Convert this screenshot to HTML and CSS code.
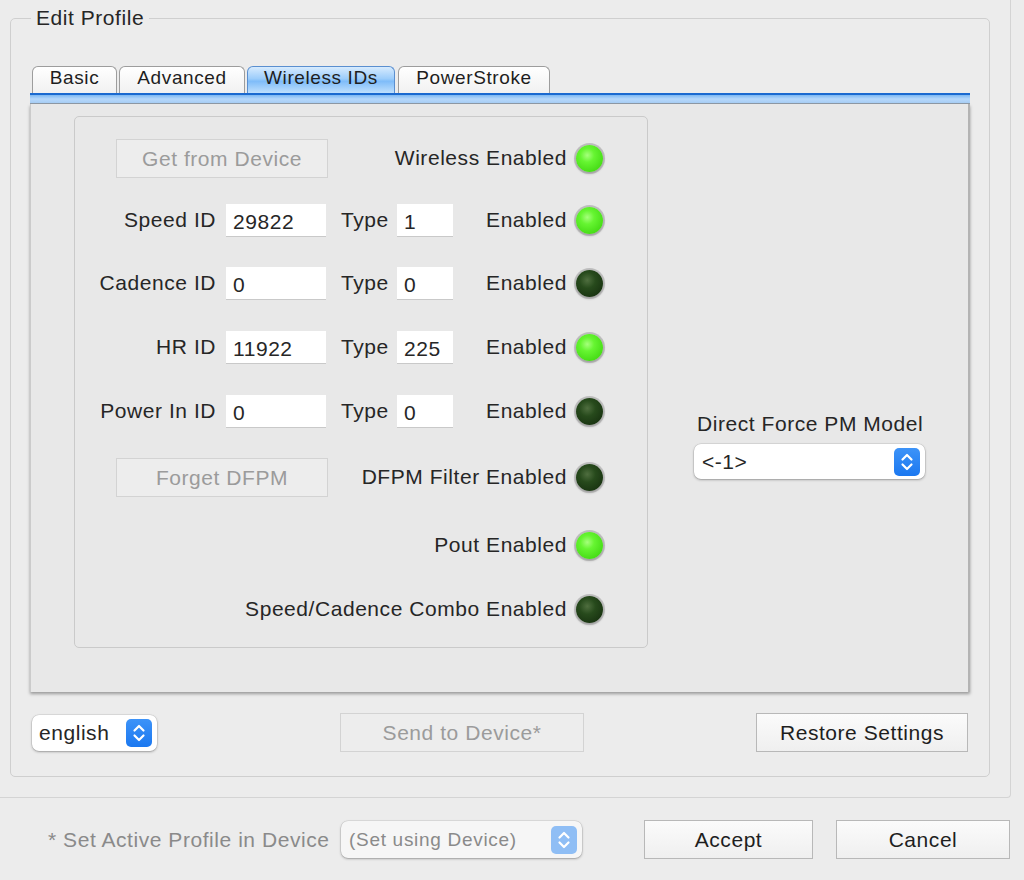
FILE: index.html
```html
<!DOCTYPE html>
<html>
<head>
<meta charset="utf-8">
<link rel="stylesheet" href="styles.css">
</head>
<body>
<div class="window">
  <div class="frame">
    <fieldset class="group">
      <legend class="group-title">Edit Profile</legend>
      <div class="tabview">
        <div class="tabs">
          <div class="tab tab-basic">Basic</div>
          <div class="tab tab-adv">Advanced</div>
          <div class="tab tab-wire selected">Wireless IDs</div>
          <div class="tab tab-ps">PowerStroke</div>
        </div>
        <div class="strip"></div>
        <div class="panel">
          <div class="box">
            <div class="row">
              <div class="btn disabled wide-btn">Get from Device</div>
              <span class="stat">Wireless Enabled</span><span class="led on"></span>
            </div>
            <div class="row">
              <span class="lbl">Speed ID</span><span class="field id">29822</span>
              <span class="type">Type</span><span class="field tp">1</span>
              <span class="stat">Enabled</span><span class="led on"></span>
            </div>
            <div class="row">
              <span class="lbl">Cadence ID</span><span class="field id">0</span>
              <span class="type">Type</span><span class="field tp">0</span>
              <span class="stat">Enabled</span><span class="led off"></span>
            </div>
            <div class="row">
              <span class="lbl">HR ID</span><span class="field id">11922</span>
              <span class="type">Type</span><span class="field tp">225</span>
              <span class="stat">Enabled</span><span class="led on"></span>
            </div>
            <div class="row">
              <span class="lbl">Power In ID</span><span class="field id">0</span>
              <span class="type">Type</span><span class="field tp">0</span>
              <span class="stat">Enabled</span><span class="led off"></span>
            </div>
            <div class="row">
              <div class="btn disabled wide-btn">Forget DFPM</div>
              <span class="stat">DFPM Filter Enabled</span><span class="led off"></span>
            </div>
            <div class="row">
              <span class="stat">Pout Enabled</span><span class="led on"></span>
            </div>
            <div class="row">
              <span class="stat">Speed/Cadence Combo Enabled</span><span class="led off"></span>
            </div>
          </div>
          <div class="side">
            <div class="side-label">Direct Force PM Model</div>
            <div class="select model">
              <span class="sel-text">&lt;-1&gt;</span>
              <span class="stepper"><svg viewBox="0 0 26 28" width="26" height="28"><path d="M8.5 11.5 L13 7 L17.5 11.5 M8.5 16.5 L13 21 L17.5 16.5" fill="none" stroke="#fff" stroke-width="2.2" stroke-linecap="round" stroke-linejoin="round"/></svg></span>
            </div>
          </div>
        </div>
      </div>
      <div class="actions">
        <div class="select lang">
          <span class="sel-text">english</span>
          <span class="stepper"><svg viewBox="0 0 26 28" width="26" height="28"><path d="M8.5 11.5 L13 7 L17.5 11.5 M8.5 16.5 L13 21 L17.5 16.5" fill="none" stroke="#fff" stroke-width="2.2" stroke-linecap="round" stroke-linejoin="round"/></svg></span>
        </div>
        <div class="btn disabled send-btn">Send to Device*</div>
        <div class="btn restore-btn">Restore Settings</div>
      </div>
    </fieldset>
  </div>
  <div class="footer">
    <span class="foot-label">* Set Active Profile in Device</span>
    <div class="select active-sel dim">
      <span class="sel-text">(Set using Device)</span>
      <span class="stepper"><svg viewBox="0 0 26 28" width="26" height="28"><path d="M8.5 11.5 L13 7 L17.5 11.5 M8.5 16.5 L13 21 L17.5 16.5" fill="none" stroke="#fff" stroke-width="2.2" stroke-linecap="round" stroke-linejoin="round"/></svg></span>
    </div>
    <div class="btn accept-btn">Accept</div>
    <div class="btn cancel-btn">Cancel</div>
  </div>
</div>
</body>
</html>
```

FILE: styles.css
```css
html, body {
  margin: 0;
  padding: 0;
  background: #ececec;
}
body {
  font-family: "Liberation Sans", Arial, sans-serif;
  font-size: 21px;
  letter-spacing: 0.55px;
  color: #262626;
  width: 1024px;
  height: 880px;
  overflow: hidden;
}
.window {
  width: 1024px;
}
.frame {
  width: 1010px;
  border-right: 1px solid #d4d4d4;
  border-bottom: 1px solid #d4d4d4;
  border-bottom-right-radius: 4px;
  padding-top: 6px;
  padding-bottom: 20px;
}
.group {
  margin: 0 20px 0 10px;
  border: 1px solid #cfcfcf;
  border-radius: 5px;
  padding: 0 19px 23px 19px;
  min-width: 0;
}
.group-title {
  margin-left: 1px;
  padding: 0 5px;
  line-height: 24px;
  height: 24px;
}
.tabview {
  margin-top: 36px;
  width: 940px;
}
.tabs {
  display: flex;
  height: 27px;
  align-items: flex-end;
  position: relative;
  z-index: 1;
}
.tab {
  height: 27px;
  box-sizing: border-box;
  border: 1px solid #9d9d9d;
  border-bottom: none;
  border-radius: 6px 6px 0 0;
  background: linear-gradient(#ffffff, #f1f1f1);
  text-align: center;
  line-height: 22px;
  font-size: 19px;
  letter-spacing: 0.6px;
  color: #1e1e1e;
}
.tab-basic { margin-left: 2px; width: 85px; }
.tab-adv { margin-left: 2px; width: 126px; }
.tab-wire { margin-left: 2px; width: 148px; }
.tab-ps { margin-left: 3px; width: 152px; }
.tab.selected {
  border-color: #5a8fd0;
  background: linear-gradient(#d7ebfe 0%, #9ccdfb 45%, #7fbcf9 55%, #bfe0fd 100%);
}
.strip {
  height: 11px;
  box-sizing: border-box;
  border-top: 2px solid #1b6ad0;
  border-bottom: 1px solid #8f9aa6;
  background: linear-gradient(#7db8f2, #b6d8fb 50%, #a7cdf4);
}
.panel {
  height: 588px;
  box-sizing: border-box;
  background: #e8e8e8;
  border-left: 1px solid #cbcbcb;
  border-right: 2px solid #b3b3b3;
  box-shadow: 0 2px 3px rgba(0, 0, 0, 0.35);
  display: flex;
  padding: 12px 0 0 43px;
}
.box {
  width: 574px;
  height: 532px;
  box-sizing: border-box;
  border: 1px solid #cacaca;
  border-radius: 5px;
  padding: 10px 44px 0 0;
  display: grid;
  grid-template-rows: 62px 62px 64px 64px 64px 68px 68px 60px;
  align-content: start;
}
.row {
  display: flex;
  align-items: center;
}
.lbl {
  width: 141px;
  text-align: right;
  flex: none;
  white-space: nowrap;
}
.field {
  height: 33px;
  box-sizing: border-box;
  background: #fff;
  border-bottom: 1px solid #c9c9c9;
  padding-left: 7px;
  line-height: 35px;
  flex: none;
}
.field.id { width: 100px; margin-left: 10px; }
.field.tp { width: 56px; }
.type {
  width: 47px;
  margin-left: 15px;
  margin-right: 9px;
  flex: none;
}
.stat {
  margin-left: auto;
  white-space: nowrap;
}
.led {
  width: 27px;
  height: 27px;
  border-radius: 50%;
  margin-left: 9px;
  flex: none;
  box-shadow: 0 0 0 2px rgba(160, 160, 160, 0.55), 0 1px 3px rgba(0, 0, 0, 0.45);
}
.led.on {
  background: radial-gradient(circle at 42% 38%, #a6ff7c 0%, #66f531 30%, #46dc16 75%, #38c20e 100%);
}
.led.off {
  background: radial-gradient(circle at 42% 38%, #4f6e3f 0%, #274a1c 35%, #1a3512 75%, #12280c 100%);
}
.btn {
  box-sizing: border-box;
  border: 1px solid #b8b8b8;
  background: linear-gradient(#fbfbfb, #efefef);
  text-align: center;
  color: #1e1e1e;
  flex: none;
  white-space: nowrap;
}
.btn.disabled {
  border-color: #d3d3d3;
  background: #ededed;
  color: #9b9b9b;
}
.wide-btn {
  width: 212px;
  height: 39px;
  line-height: 37px;
  margin-left: 41px;
}
.side {
  margin-left: 46px;
  margin-top: 295px;
  width: 231px;
}
.side-label {
  line-height: 26px;
  padding-left: 3px;
  white-space: nowrap;
}
.select {
  display: flex;
  align-items: center;
  justify-content: space-between;
  background: #fff;
  border-radius: 7px;
  box-shadow: 0 0 0 0.5px rgba(0, 0, 0, 0.12), 0 1px 2.5px rgba(0, 0, 0, 0.3);
  box-sizing: border-box;
  flex: none;
}
.sel-text {
  padding-left: 8px;
  white-space: nowrap;
}
.stepper {
  width: 26px;
  height: 28px;
  background: linear-gradient(#3d93f8, #1b78f0);
  border-radius: 5px;
  margin-right: 5px;
  display: flex;
}
.model {
  margin-top: 7px;
  width: 231px;
  height: 35px;
}
.actions {
  margin-top: 20px;
  display: flex;
  align-items: center;
  height: 41px;
}
.lang {
  margin-left: 2px;
  width: 125px;
  height: 36px;
}
.lang .sel-text { padding-left: 7px; }
.send-btn {
  margin-left: 183px;
  width: 244px;
  height: 39px;
  line-height: 37px;
}
.restore-btn {
  margin-left: 172px;
  width: 212px;
  height: 39px;
  line-height: 37px;
}
.footer {
  margin-top: 22px;
  display: flex;
  align-items: center;
  height: 39px;
  padding-left: 48px;
}
.foot-label {
  color: #8a8a8a;
  white-space: nowrap;
  width: 285px;
}
.active-sel {
  margin-left: 8px;
  width: 241px;
  height: 37px;
  background: #f6f6f6;
  color: #8a8a8a;
}
.active-sel .sel-text { font-size: 19px; letter-spacing: 0.7px; }
.dim .stepper {
  background: #8fbef5;
}
.accept-btn {
  margin-left: 62px;
  width: 169px;
  height: 39px;
  line-height: 37px;
}
.cancel-btn {
  margin-left: 23px;
  width: 174px;
  height: 39px;
  line-height: 37px;
}
```
